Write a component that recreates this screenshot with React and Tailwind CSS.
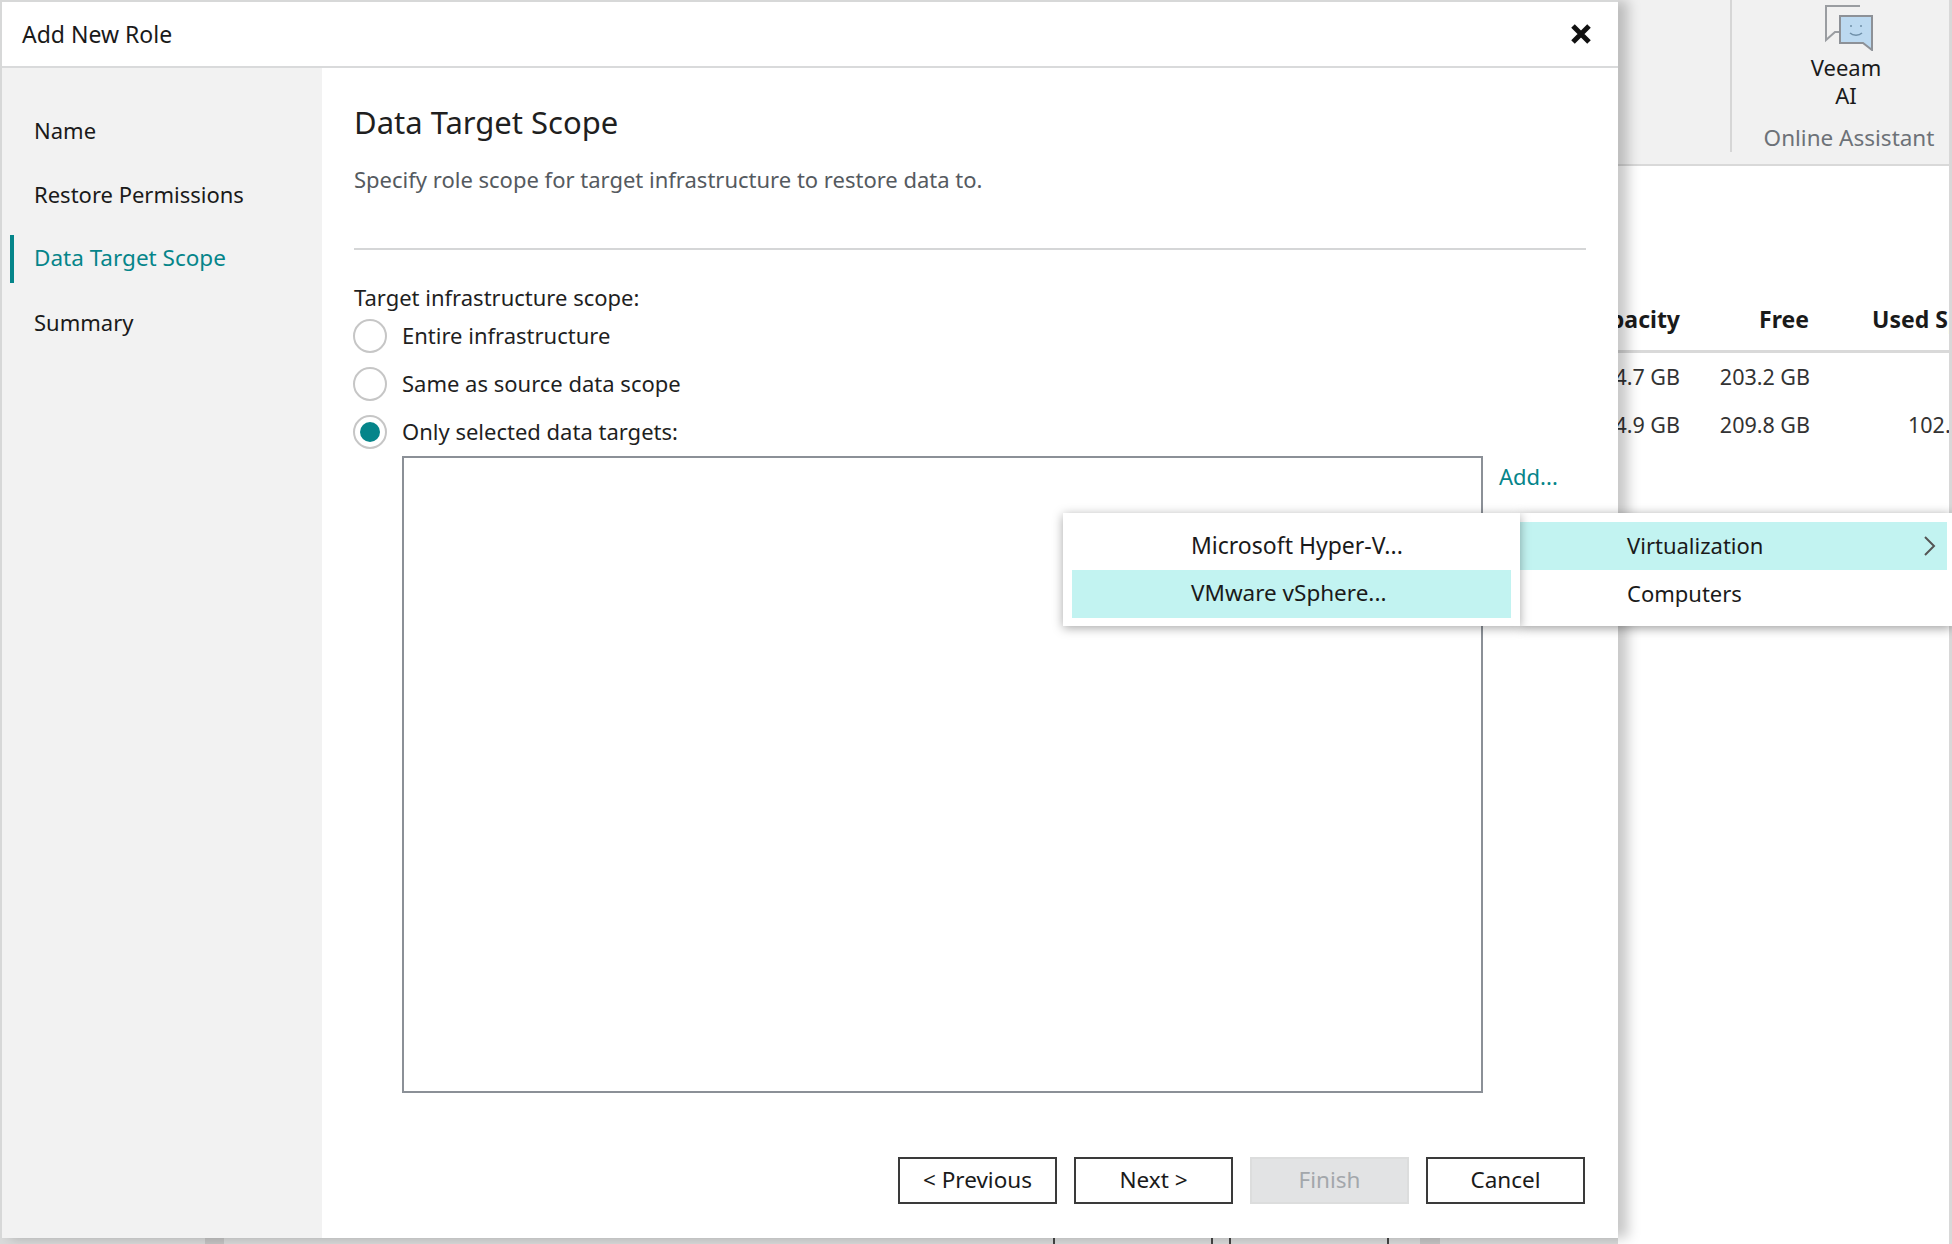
// App.jsx
const TEAL = "text-[#05858a]";

const navItems = [
  { label: "Name" },
  { label: "Restore Permissions" },
  { label: "Data Target Scope", active: true },
  { label: "Summary" },
];

const scopeOptions = [
  { label: "Entire infrastructure" },
  { label: "Same as source data scope" },
  { label: "Only selected data targets:", checked: true },
];

const buttons = [
  { label: "< Previous" },
  { label: "Next >" },
  { label: "Finish", disabled: true },
  { label: "Cancel" },
];

function AssistantIcon() {
  return (
    <svg width="50" height="46" viewBox="0 0 50 46" fill="none">
      <path d="M36 1H2v34l9-8h6" stroke="#9a9da1" strokeWidth="2" />
      <path d="M16 11h32v34l-9-7H16z" fill="#bcd9f0" stroke="#8d9197" strokeWidth="2" />
      <circle cx="27" cy="21" r="1" fill="#6f8fa8" />
      <circle cx="37" cy="21" r="1" fill="#6f8fa8" />
      <path d="M26 28c3 3 9 3 12 0" stroke="#6f8fa8" strokeWidth="1.5" />
    </svg>
  );
}

function BackgroundApp() {
  return (
    <div className="flex-1 min-w-0 flex flex-col overflow-hidden border-r-[3px] border-[#d8d8d8]">
      {/* ribbon */}
      <div className="h-[166px] bg-[#f1f1f1] border-b-2 border-[#d9d9d9] flex items-start">
        <div className="ml-[112px] w-[2px] h-[152px] shrink-0 bg-[#d6d6d6]" />
        <div className="w-[234px] shrink-0 flex flex-col items-center text-[22px] leading-[27px] text-[#1a1a1a]">
          <div className="mt-[5px] h-[50px] flex">
            <AssistantIcon />
          </div>
          <span className="-mt-[1px] mr-[6px]">Veeam</span>
          <span className="mt-[1px] mr-[6px]">AI</span>
          <span className="mt-[15px] text-[22.5px] text-[#6d7278]">Online Assistant</span>
        </div>
      </div>
      {/* table behind the dialog */}
      <div className="mt-[136px] h-[51px] flex items-start border-b-[3px] border-[#d9d9d9] font-bold text-[23px] text-[#1a1a1a] leading-[34px] whitespace-nowrap">
        <div className="w-[62px] shrink-0 flex justify-end">Capacity</div>
        <div className="w-[129px] shrink-0 flex justify-end">Free</div>
        <div className="ml-[63px] shrink-0">Used Space</div>
      </div>
      <div className="flex h-[48px] items-center text-[21.5px] text-[#333] whitespace-nowrap">
        <div className="w-[62px] shrink-0 flex justify-end">4.7 GB</div>
        <div className="w-[130px] shrink-0 flex justify-end">203.2 GB</div>
      </div>
      <div className="flex h-[48px] items-center text-[21.5px] text-[#333] whitespace-nowrap">
        <div className="w-[62px] shrink-0 flex justify-end">4.9 GB</div>
        <div className="w-[130px] shrink-0 flex justify-end">209.8 GB</div>
        <div className="ml-[98px] shrink-0">102.</div>
      </div>
    </div>
  );
}

function Radio({ label, checked }) {
  return (
    <label className="h-[48px] flex items-center gap-[15px] -ml-[1px]">
      <span className="w-[34px] h-[34px] rounded-full border-2 border-[#c6c6c6] flex items-center justify-center">
        {checked && <span className="w-[20px] h-[20px] rounded-full bg-[#05858a]" />}
      </span>
      <span className="pb-[2px] text-[#1f1f1f]">{label}</span>
    </label>
  );
}

function Dialog() {
  return (
    <div className="relative z-10 h-[1238px] bg-white border-t-2 border-l-2 border-[#d7d8d8] flex flex-col shadow-[10px_0_12px_rgba(0,0,0,0.22)]">
      <header className="h-[66px] shrink-0 border-b-2 border-[#d9dadb] flex items-center justify-between pl-[20px] pr-[26px] text-[#1a1a1a]">
        <span className="text-[23px]">Add New Role</span>
        <svg width="22" height="22" viewBox="0 0 22 22">
          <path d="M3 3l16 16M19 3L3 19" stroke="#111" strokeWidth="5" />
        </svg>
      </header>

      <div className="flex flex-1 min-h-0">
        {/* steps */}
        <nav className="w-[320px] shrink-0 bg-[#f2f2f2] pt-[31px] text-[22px]">
          {navItems.map((item) => (
            <div key={item.label} className="h-[64px] pl-[8px] flex items-center">
              <span className={"w-[4px] h-[48px] mr-[20px] " + (item.active ? "bg-[#05858a]" : "")} />
              <span className={"pb-[2px] " + (item.active ? TEAL + " text-[22.5px]" : "text-[#1a1a1a]")}>{item.label}</span>
            </div>
          ))}
        </nav>

        {/* page */}
        <main className="flex-1 pl-[32px] pr-[32px] text-[22px] leading-[28px]">
          <h1 className="mt-[34px] text-[31px] leading-[40px] text-[#1f1f1f]">Data Target Scope</h1>
          <p className="mt-[23px] text-[#555a60]">Specify role scope for target infrastructure to restore data to.</p>
          <div className="mt-[55px] h-[2px] bg-[#d5d6d7]" />
          <p className="mt-[33px] mb-[1px] text-[#1f1f1f]">Target infrastructure scope:</p>
          {scopeOptions.map((opt) => (
            <Radio key={opt.label} label={opt.label} checked={opt.checked} />
          ))}
          <div className="ml-[48px] flex items-start gap-[16px]">
            <div className="w-[1081px] h-[637px] border-2 border-[#8b9097]" />
            <span className={"mt-[6px] " + TEAL}>Add...</span>
          </div>
          <div className="mt-[64px] mr-[1px] flex justify-end gap-[17px] text-[22.5px]">
            {buttons.map((b) => (
              <button
                key={b.label}
                className={
                  "w-[159px] h-[47px] border-2 pb-[2px] " +
                  (b.disabled
                    ? "bg-[#e2e3e4] border-[#dcdddd] text-[#a3a7ab]"
                    : "bg-white border-[#3a3a3a] text-[#1a1a1a]")
                }
              >
                {b.label}
              </button>
            ))}
          </div>
        </main>
      </div>
    </div>
  );
}

function AddMenu() {
  return (
    <>
      <div className="absolute z-20 left-[1520px] top-[513px] w-[432px] h-[113px] bg-white py-[9px] pr-[5px] text-[22px] text-[#1a1a1a] shadow-[0_2px_10px_rgba(0,0,0,0.4)]">
        <div className="h-[48px] bg-[#c2f3f1] pl-[107px] pr-[10px] flex items-center justify-between">
          <span className="pb-[2px]">Virtualization</span>
          <svg width="14" height="22" viewBox="0 0 14 22" fill="none">
            <path d="M2 2l9 9-9 9" stroke="#555" strokeWidth="2" />
          </svg>
        </div>
        <div className="h-[48px] pl-[107px] pb-[2px] flex items-center">Computers</div>
      </div>
      <div className="absolute z-30 left-[1063px] top-[513px] w-[457px] h-[113px] bg-white py-[9px] px-[9px] text-[23px] text-[#1a1a1a] shadow-[0_2px_10px_rgba(0,0,0,0.35)]">
        <div className="h-[48px] pl-[119px] pb-[2px] flex items-center">Microsoft Hyper-V...</div>
        <div className="h-[48px] bg-[#c2f3f1] pl-[119px] pb-[2px] flex items-center text-[22.5px]">VMware vSphere...</div>
      </div>
    </>
  );
}

export default function App() {
  return (
    <div
      className="relative w-[1952px] h-[1244px] overflow-hidden bg-white flex"
      style={{ fontFamily: '"Noto Sans", "Open Sans", sans-serif' }}
    >
      <div className="w-[1618px] shrink-0 flex flex-col">
        <Dialog />
        {/* window edge showing under the dialog */}
        <div className="flex-1 flex bg-[#d9dada]">
          <div className="ml-[205px] w-[19px] bg-[#c4c4c4]" />
          <div className="ml-[829px] w-[2px] bg-[#444]" />
          <div className="ml-[156px] w-[2px] bg-[#444]" />
          <div className="ml-[16px] w-[2px] bg-[#444]" />
          <div className="ml-[156px] w-[2px] bg-[#444]" />
          <div className="ml-[31px] w-[20px] bg-[#c4c4c4]" />
        </div>
      </div>
      <BackgroundApp />
      <AddMenu />
    </div>
  );
}
